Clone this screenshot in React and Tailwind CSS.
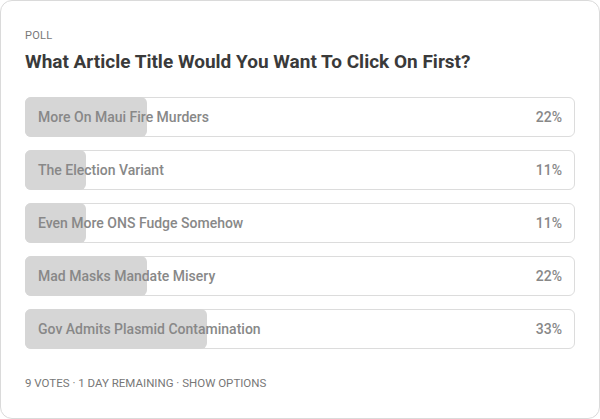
import React from 'react';

const options = [
  { label: 'More On Maui Fire Murders', pct: 22 },
  { label: 'The Election Variant', pct: 11 },
  { label: 'Even More ONS Fudge Somehow', pct: 11 },
  { label: 'Mad Masks Mandate Misery', pct: 22 },
  { label: 'Gov Admits Plasmid Contamination', pct: 33 },
];

const OptionRow = ({ label, pct }) => (
  <div className="relative h-[40px] rounded-md border border-[#dcdcdc] bg-white">
    <div
      className="absolute -left-px -top-px -bottom-px rounded-md bg-[#d6d6d6]"
      style={{ width: `calc(${pct}% + 1px)` }}
    ></div>
    <div className="relative flex h-full items-center justify-between px-[12px] text-[14px] font-medium text-[#888]">
      <span>{label}</span>
      <span>{pct}%</span>
    </div>
  </div>
);

export default function App() {
  return (
    <div className="h-[419px] w-[600px] bg-white font-['Roboto',sans-serif]">
      <div className="h-full rounded-xl border border-[#dadada] px-[24px] pt-[28px]">
        <p className="text-[11px] leading-[14px] tracking-wide text-[#777]">POLL</p>
        <h2 className="mt-[6px] text-[19px] font-bold leading-[26px] text-[#3a3a3a]">
          What Article Title Would You Want To Click On First?
        </h2>
        <div className="mt-[22px] flex flex-col gap-[13px]">
          {options.map((o) => (
            <OptionRow key={o.label} label={o.label} pct={o.pct} />
          ))}
        </div>
        <p className="mt-[27px] text-[11.5px] leading-[14px] text-[#777]">
          9 VOTES · 1 DAY REMAINING · SHOW OPTIONS
        </p>
      </div>
    </div>
  );
}
